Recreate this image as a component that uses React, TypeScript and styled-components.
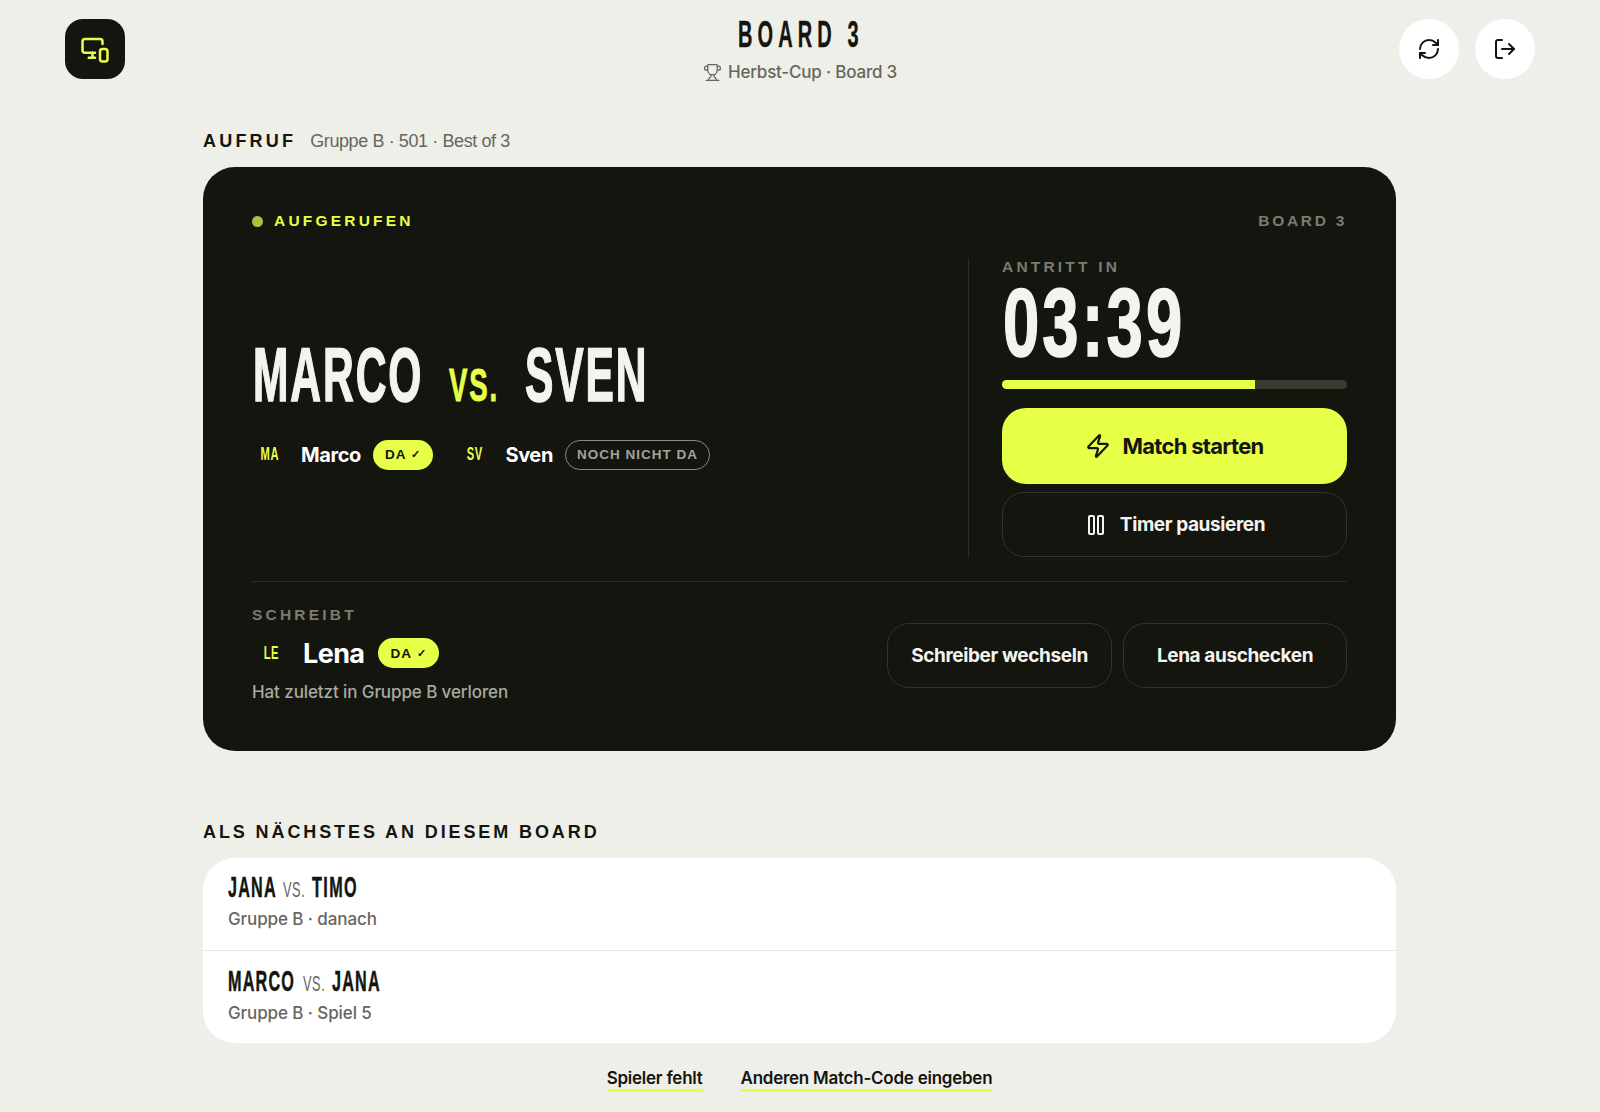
import React from 'react';
import styled, { createGlobalStyle } from 'styled-components';
import { LogOut, MonitorSmartphone, Pause, RefreshCw, Trophy, Zap } from 'lucide-react';

const DARK = '#15150f';
const ACCENT = '#e8ff47';
const PAPER = '#eeefe9';
const MUTED = '#66665e';
const CONDENSED = '"Liberation Sans Narrow", "Liberation Sans", sans-serif';

const Global = createGlobalStyle`
  html, body { margin: 0; padding: 0; background: ${PAPER}; }
  body { font-family: Inter, "Liberation Sans", sans-serif; color: ${DARK}; }
  * { box-sizing: border-box; }
`;

const Page = styled.div`
  width: 1600px; height: 1112px; overflow: hidden;
  display: flex; flex-direction: column;
`;

// Schmale Schrift: Box behält die Zielbreite, Text wird horizontal gestaucht
const Squeeze = styled.span<{ $w: number; $sx: number; $stroke?: number; $ls?: number }>`
  display: inline-block;
  width: ${({ $w }) => $w}px;
  font-family: ${CONDENSED};
  font-weight: 700;
  white-space: nowrap;
  letter-spacing: ${({ $ls }) => $ls ?? 0}px;
  transform: scaleX(${({ $sx }) => $sx});
  transform-origin: left center;
  -webkit-text-stroke: ${({ $stroke }) => $stroke ?? 0}px currentColor;
`;

// ── Kopf ─────────────────────────────────────────────
const Header = styled.header`
  display: grid; grid-template-columns: 1fr auto 1fr;
  padding: 19px 65px 0;
  height: 131px;
`;

const Logo = styled.div`
  width: 60px; height: 60px;
  background: ${DARK}; color: ${ACCENT};
  border-radius: 18px;
  display: flex; align-items: center; justify-content: center;
`;

const TitleBlock = styled.div`
  display: flex; flex-direction: column; align-items: center;
`;

const BoardTitle = styled.h1`
  margin: 0; height: 37px; line-height: 29px; font-size: 37px;
  color: ${DARK};
`;

const Subtitle = styled.div`
  display: flex; align-items: center; gap: 6px; margin-top: 6px;
  font-size: 17px; font-weight: 500; letter-spacing: -0.2px; color: ${MUTED};
`;

const HeaderActions = styled.div`
  display: flex; justify-content: flex-end; gap: 16px;
`;

const RoundButton = styled.button`
  width: 60px; height: 60px; border: none; border-radius: 50%;
  background: #fff; color: ${DARK}; padding: 0;
  display: flex; align-items: center; justify-content: center;
`;

const Main = styled.main`
  width: 1193px; margin: 0 0 0 203px;
`;

const SectionHead = styled.div`
  display: flex; align-items: baseline; gap: 14px;
  height: 25px;
`;

const SectionLabel = styled.h2`
  margin: 0;
  font-family: "Liberation Sans", sans-serif;
  font-size: 18px; font-weight: 700; letter-spacing: 2.9px; color: ${DARK};
`;

const CallLabel = styled(SectionLabel)`
  letter-spacing: 3.2px;
`;

const SectionNote = styled.span`
  font-family: "Liberation Sans", sans-serif;
  font-size: 18px; letter-spacing: -0.4px; color: ${MUTED};
`;

// ── Aufruf-Karte ─────────────────────────────────────
const CallCard = styled.section`
  margin-top: 11px;
  height: 584px;
  background: ${DARK}; color: #f4f4ef;
  border-radius: 32px;
  padding: 44px 49px 0 49px;
`;

const CardTop = styled.div`
  display: flex; justify-content: space-between; align-items: center;
  height: 20px;
  font-family: "Liberation Sans", sans-serif;
  font-size: 15.5px; font-weight: 700; letter-spacing: 3.2px;
`;

const Status = styled.div`
  display: flex; align-items: center; gap: 11px; color: ${ACCENT};
`;

const Dot = styled.span`
  width: 11px; height: 11px; border-radius: 50%; background: #a9c23a;
`;

const BoardTag = styled.span`
  color: #7b7b72; letter-spacing: 2.7px;
`;

const MatchArea = styled.div`
  display: grid; grid-template-columns: 1fr 379px;
  margin-top: 27px; height: 300px;
`;

const MatchLeft = styled.div`
  display: flex; flex-direction: column; justify-content: center;
  padding-bottom: 14px;
`;

const Headline = styled.div`
  display: flex; align-items: baseline; padding-left: 1px;
  font-size: 76px; line-height: 84px; color: #f4f4ef;
`;

const HeadlineVs = styled(Squeeze)`
  margin: 0 28px 0 28px;
  font-size: 46px; color: ${ACCENT};
`;

const Checkins = styled.div`
  display: flex; align-items: center; gap: 23px; margin-top: 13px;
`;

const Checkin = styled.div`
  display: flex; align-items: center;
`;

const Initials = styled.span<{ $wide?: boolean }>`
  width: ${({ $wide }) => ($wide ? 38 : 36)}px; margin-right: 13px;
  display: flex; justify-content: center;
  font-family: ${CONDENSED}; font-weight: 700;
  font-size: 18px; letter-spacing: 0.8px; color: ${ACCENT};
`;

const InitialsInner = styled.span`
  display: inline-block; transform: scaleX(0.62);
`;

const PlayerName = styled.span<{ $large?: boolean }>`
  font-size: ${({ $large }) => ($large ? 27 : 20)}px;
  font-weight: 700; letter-spacing: ${({ $large }) => ($large ? -0.6 : -0.4)}px; color: #fff;
  margin-right: ${({ $large }) => ($large ? 14 : 12)}px;
`;

const Pill = styled.span<{ $present: boolean }>`
  height: 30px; padding: 0 ${({ $present }) => ($present ? 12 : 11)}px;
  display: inline-flex; align-items: center; gap: 5px;
  border-radius: 15px;
  font-family: "Liberation Sans", sans-serif;
  font-size: 13.5px; font-weight: 700; letter-spacing: 1px;
  background: ${({ $present }) => ($present ? ACCENT : 'transparent')};
  color: ${({ $present }) => ($present ? DARK : '#a3a39a')};
  border: ${({ $present }) => ($present ? 'none' : '1.5px solid #8a8a82')};
`;

const CheckMark = styled.span`
  font-size: 11px;
`;

const TimerColumn = styled.div`
  border-left: 1px solid #2c2c25;
  padding-left: 33px;
  display: flex; flex-direction: column;
`;

const MiniLabel = styled.div`
  font-family: "Liberation Sans", sans-serif;
  font-size: 15.5px; font-weight: 700; letter-spacing: 3.2px; color: #7b7b72;
  line-height: 18px;
`;

const Countdown = styled.div`
  height: 93px; line-height: 91px;
  font-size: 96px; color: #f4f4ef; padding-left: 1px;
`;

const Progress = styled.div`
  margin-top: 11px; height: 9px; border-radius: 5px; background: #3a3a31; overflow: hidden; flex: none;
`;

const ProgressFill = styled.div`
  height: 100%; background: ${ACCENT};
`;

const StartButton = styled.button`
  margin-top: 19px; height: 76px; border: none; border-radius: 24px; flex: none;
  background: ${ACCENT}; color: ${DARK};
  font-family: inherit; font-size: 22px; font-weight: 700; letter-spacing: -0.7px;
  display: flex; align-items: center; justify-content: center; gap: 11px;
`;

const GhostButton = styled.button<{ $w?: number }>`
  height: 65px; background: transparent; flex: none;
  border: 1.5px solid #33332b; border-radius: 22px;
  color: #f4f4ef;
  font-family: inherit; font-size: 19px; font-weight: 700; letter-spacing: -0.4px;
  display: flex; align-items: center; justify-content: center; gap: 12px;
  ${({ $w }) => ($w ? `width: ${$w}px;` : '')}
`;

const PauseButton = styled(GhostButton)`
  margin-top: 8px;
`;

const WriterRow = styled.div`
  margin-top: 23px; padding-top: 24px;
  border-top: 1px solid #2c2c25;
  display: flex; justify-content: space-between; align-items: flex-start;
`;

const WriterInfo = styled.div`
  display: flex; flex-direction: column;
`;

const WriterLine = styled.div`
  display: flex; align-items: center; margin-top: 14px; height: 30px;
`;

const WriterNote = styled.div`
  margin-top: 14px; font-size: 17px; font-weight: 500; letter-spacing: -0.1px; color: #a9a9a0;
`;

const WriterActions = styled.div`
  display: flex; gap: 11px; margin-top: 17px;
`;

// ── Nächste Spiele ───────────────────────────────────
const NextHead = styled(SectionHead)`
  margin-top: 71px;
`;

const QueueList = styled.div`
  margin-top: 11px;
  background: #fff; border-radius: 32px; overflow: hidden;
`;

const QueueRow = styled.div`
  height: 92px; padding: 12px 25px 0;
  & + & { height: 93px; padding-top: 13px; border-top: 1px solid #e8e8e2; }
`;

const QueueTitle = styled.div`
  display: flex; align-items: baseline; height: 34px; line-height: 34px;
  font-size: 30px; color: ${DARK};
`;

const QueueVs = styled(Squeeze)`
  font-weight: 400; font-size: 22px; color: ${MUTED};
  margin: 0 8px;
`;

const QueueMeta = styled.div`
  margin-top: 5px; font-size: 17px; font-weight: 500; letter-spacing: -0.1px; color: ${MUTED};
`;

const FooterLinks = styled.div`
  display: flex; justify-content: center; gap: 38px; margin-top: 24px;
`;

const TextLink = styled.a`
  font-size: 17px; font-weight: 600; letter-spacing: -0.25px; line-height: 22px;
  color: ${DARK}; border-bottom: 3px solid ${ACCENT};
`;

export default function App() {
  return (
    <Page>
      <Global />
      <Header>
        <Logo><MonitorSmartphone size={30} strokeWidth={2} /></Logo>
        <TitleBlock>
          <BoardTitle>
            <Squeeze $w={123} $sx={0.54} $stroke={0.4} $ls={9.5}>BOARD 3</Squeeze>
          </BoardTitle>
          <Subtitle><Trophy size={19} strokeWidth={1.6} />Herbst-Cup · Board 3</Subtitle>
        </TitleBlock>
        <HeaderActions>
          <RoundButton><RefreshCw size={24} strokeWidth={2} /></RoundButton>
          <RoundButton><LogOut size={24} strokeWidth={2} /></RoundButton>
        </HeaderActions>
      </Header>

      <Main>
        <SectionHead>
          <CallLabel>AUFRUF</CallLabel>
          <SectionNote>Gruppe B · 501 · Best of 3</SectionNote>
        </SectionHead>

        <CallCard>
          <CardTop>
            <Status><Dot />AUFGERUFEN</Status>
            <BoardTag>BOARD 3</BoardTag>
          </CardTop>

          <MatchArea>
            <MatchLeft>
              <Headline>
                <Squeeze $w={168} $sx={0.56} $stroke={1.6} $ls={3.4}>MARCO</Squeeze>
                <HeadlineVs $w={48} $sx={0.6} $stroke={0.9} $ls={3}>VS.</HeadlineVs>
                <Squeeze $w={121} $sx={0.56} $stroke={1.6} $ls={3.4}>SVEN</Squeeze>
              </Headline>
              <Checkins>
                <Checkin>
                  <Initials><InitialsInner>MA</InitialsInner></Initials>
                  <PlayerName>Marco</PlayerName>
                  <Pill $present>DA <CheckMark>✓</CheckMark></Pill>
                </Checkin>
                <Checkin>
                  <Initials><InitialsInner>SV</InitialsInner></Initials>
                  <PlayerName>Sven</PlayerName>
                  <Pill $present={false}>NOCH NICHT DA</Pill>
                </Checkin>
              </Checkins>
            </MatchLeft>

            <TimerColumn>
              <MiniLabel>ANTRITT IN</MiniLabel>
              <Countdown>
                <Squeeze $w={174} $sx={0.68} $stroke={1.6} $ls={4.5}>03:39</Squeeze>
              </Countdown>
              <Progress><ProgressFill style={{ width: '73.4%' }} /></Progress>
              <StartButton><Zap size={26} strokeWidth={2} />Match starten</StartButton>
              <PauseButton><Pause size={24} strokeWidth={2} />Timer pausieren</PauseButton>
            </TimerColumn>
          </MatchArea>

          <WriterRow>
            <WriterInfo>
              <MiniLabel>SCHREIBT</MiniLabel>
              <WriterLine>
                <Initials $wide><InitialsInner>LE</InitialsInner></Initials>
                <PlayerName $large>Lena</PlayerName>
                <Pill $present>DA <CheckMark>✓</CheckMark></Pill>
              </WriterLine>
              <WriterNote>Hat zuletzt in Gruppe B verloren</WriterNote>
            </WriterInfo>
            <WriterActions>
              <GhostButton $w={225}>Schreiber wechseln</GhostButton>
              <GhostButton $w={224}>Lena auschecken</GhostButton>
            </WriterActions>
          </WriterRow>
        </CallCard>

        <NextHead>
          <SectionLabel>ALS NÄCHSTES AN DIESEM BOARD</SectionLabel>
        </NextHead>

        <QueueList>
          <QueueRow>
            <QueueTitle>
              <Squeeze $w={47} $sx={0.54} $stroke={0.5} $ls={2.2}>JANA</Squeeze>
              <QueueVs $w={21} $sx={0.58} $ls={1}>VS.</QueueVs>
              <Squeeze $w={48} $sx={0.54} $stroke={0.5} $ls={2.6}>TIMO</Squeeze>
            </QueueTitle>
            <QueueMeta>Gruppe B · danach</QueueMeta>
          </QueueRow>
          <QueueRow>
            <QueueTitle>
              <Squeeze $w={67} $sx={0.54} $stroke={0.5} $ls={2.2}>MARCO</Squeeze>
              <QueueVs $w={21} $sx={0.58} $ls={1}>VS.</QueueVs>
              <Squeeze $w={47} $sx={0.54} $stroke={0.5} $ls={2.2}>JANA</Squeeze>
            </QueueTitle>
            <QueueMeta>Gruppe B · Spiel 5</QueueMeta>
          </QueueRow>
        </QueueList>

        <FooterLinks>
          <TextLink>Spieler fehlt</TextLink>
          <TextLink>Anderen Match-Code eingeben</TextLink>
        </FooterLinks>
      </Main>
    </Page>
  );
}
